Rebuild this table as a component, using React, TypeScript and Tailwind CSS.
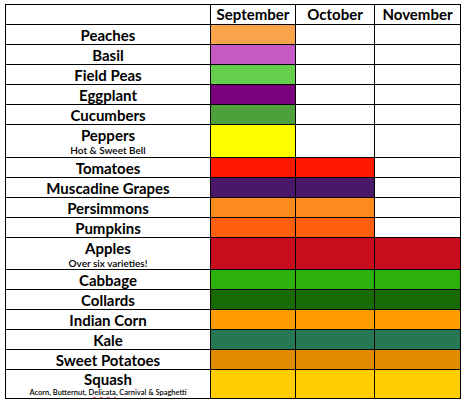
import React from "react";

type Row = { name: React.ReactNode; sub?: React.ReactNode; subSize?: string; color: string; n: number; h: string };

const rows: Row[] = [
  { name: "Peaches", color: "bg-[#faa44c]", n: 1, h: "h-[19px]" },
  { name: "Basil", color: "bg-[#c65bc6]", n: 1, h: "h-[19px]" },
  { name: "Field Peas", color: "bg-[#66cd4d]", n: 1, h: "h-[19px]" },
  { name: "Eggplant", color: "bg-[#7b007b]", n: 1, h: "h-[19px]" },
  { name: "Cucumbers", color: "bg-[#4ea03d]", n: 1, h: "h-[19px]" },
  { name: "Peppers", sub: "Hot & Sweet Bell", subSize: "text-[10px] leading-[12px]", color: "bg-[#ffff00]", n: 1, h: "h-[32px]" },
  { name: "Tomatoes", color: "bg-[#ff1800]", n: 2, h: "h-[19px]" },
  {
    name: (
      <>
        <span className="underline decoration-wavy decoration-red-500 decoration-1 underline-offset-2">Muscadine</span> Grapes
      </>
    ),
    color: "bg-[#4a1769]",
    n: 2,
    h: "h-[19px]",
  },
  { name: "Persimmons", color: "bg-[#fc8b1e]", n: 2, h: "h-[19px]" },
  { name: "Pumpkins", color: "bg-[#fd5f0c]", n: 2, h: "h-[19px]" },
  { name: "Apples", sub: "Over six varieties!", subSize: "text-[10px] leading-[12px]", color: "bg-[#c90b1e]", n: 3, h: "h-[31px]" },
  { name: "Cabbage", color: "bg-[#2cb00a]", n: 3, h: "h-[19px]" },
  { name: "Collards", color: "bg-[#186a02]", n: 3, h: "h-[19px]" },
  { name: "Indian Corn", color: "bg-[#ff9c00]", n: 3, h: "h-[19px]" },
  { name: "Kale", color: "bg-[#267855]", n: 3, h: "h-[19px]" },
  { name: "Sweet Potatoes", color: "bg-[#e38b00]", n: 3, h: "h-[19px]" },
  {
    name: "Squash",
    sub: (
      <>
        Acorn, Butternut,{" "}
        <span className="underline decoration-wavy decoration-red-500 decoration-1">Delicata</span>, Carnival &amp; Spaghetti
      </>
    ),
    subSize: "text-[7.5px] leading-[10px]",
    color: "bg-[#ffcd00]",
    n: 3,
    h: "h-[28px]",
  },
];

export default function App() {
  return (
    <div className="w-[466px] h-[404px] bg-white pl-[5px] pt-[4px]" style={{ fontFamily: "Lato, 'Open Sans', sans-serif" }}>
      <div className="inline-grid grid-cols-[204px_84px_78px_85px] gap-px p-px bg-black text-black">
        <div className="bg-white h-[19px]" />
        {["September", "October", "November"].map((m) => (
          <div key={m} className="bg-white h-[19px] flex items-center justify-center font-bold text-[15px] leading-none">
            {m}
          </div>
        ))}
        {rows.map((r, i) => (
          <React.Fragment key={i}>
            <div className={`bg-white ${r.h} flex flex-col items-center justify-center overflow-hidden`}>
              <div className="font-bold text-[15px] leading-[18px]">{r.name}</div>
              {r.sub && <div className={`${r.subSize} font-semibold`}>{r.sub}</div>}
            </div>
            {[0, 1, 2].map((c) => (
              <div key={c} className={`${r.h} ${c < r.n ? r.color : "bg-white"}`} />
            ))}
          </React.Fragment>
        ))}
      </div>
    </div>
  );
}
